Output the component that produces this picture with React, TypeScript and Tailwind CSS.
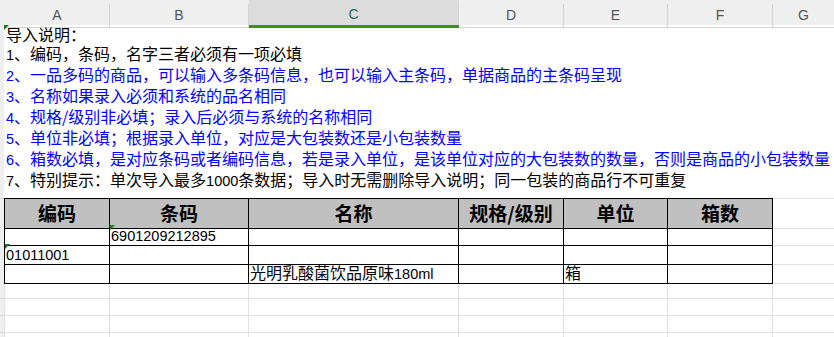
import React from "react";

const cjk = "font-['Noto_Sans_CJK_SC',sans-serif]";
const headCols = "grid grid-cols-[5px_105px_139px_210px_105px_104px_105px_1fr]";
const tableCols = "grid grid-cols-[4px_106px_139px_210px_105px_104px_105px_1fr]";

// digits in the sheet are half-width, ~8px each
const Num = ({ children }: { children: React.ReactNode }) => (
  <span className="font-['Liberation_Sans',sans-serif] text-[14.5px]">{children}</span>
);

const Flag = () => (
  <span className="absolute left-0 top-0 h-0 w-0 border-t-[5px] border-r-[5px] border-t-[#1f7a1f] border-r-transparent" />
);

const letters = ["A", "B", "C", "D", "E", "F", "G"];

const ColumnHeader = () => (
  <div className={`${headCols} h-[25px] bg-[#efefef]`}>
    <div className="border-b border-[#d4d4d4]" />
    {letters.map((l) => {
      const active = l === "C";
      return (
        <div
          key={l}
          className={`flex flex-col ${
            active ? "bg-[#dcdcdc] border-b-[3px] border-[#3f8c28]" : "border-b border-[#d4d4d4]"
          }`}
        >
          <div className="h-[4px]" />
          <div
            className={`flex-1 flex items-center justify-center font-['Liberation_Sans',sans-serif] text-[14px] ${
              active ? "text-[#1f6e5e]" : "text-[#555555]"
            } ${l !== "G" ? "border-r border-[#d4d4d4]" : ""}`}
          >
            {l}
          </div>
        </div>
      );
    })}
  </div>
);

const lines: { text: React.ReactNode; blue?: boolean }[] = [
  { text: "导入说明：" },
  { text: <><Num>1</Num>、编码，条码，名字三者必须有一项必填</> },
  { text: <><Num>2</Num>、一品多码的商品，可以输入多条码信息，也可以输入主条码，单据商品的主条码呈现</>, blue: true },
  { text: <><Num>3</Num>、名称如果录入必须和系统的品名相同</>, blue: true },
  { text: <><Num>4</Num>、规格/级别非必填；录入后必须与系统的名称相同</>, blue: true },
  { text: <><Num>5</Num>、单位非必填；根据录入单位，对应是大包装数还是小包装数量</>, blue: true },
  { text: <><Num>6</Num>、箱数必填，是对应条码或者编码信息，若是录入单位，是该单位对应的大包装数的数量，否则是商品的小包装数量</>, blue: true },
  { text: <><Num>7</Num>、特别提示：单次导入最多<Num>1000</Num>条数据；导入时无需删除导入说明；同一包装的商品行不可重复</> },
];

const headers = ["编码", "条码", "名称", "规格/级别", "单位", "箱数"];

const dataRows: React.ReactNode[][] = [
  ["", <Num key="b">6901209212895</Num>, "", "", "", ""],
  [<Num key="a">01011001</Num>, "", "", "", "", ""],
  ["", "", <>光明乳酸菌饮品原味<Num>180ml</Num></>, "", "箱", ""],
];

const flags: Record<string, boolean> = { "0-1": true, "1-0": true };

export default function App() {
  return (
    <div className={`w-[834px] h-[337px] overflow-hidden bg-white ${cjk}`}>
      <ColumnHeader />

      {/* merged instruction cell */}
      <div className={`${tableCols} h-[173px]`}>
        <div className="bg-[#efefef]" />
        <div className="col-span-7 relative pl-[2px] text-[16px] leading-[19px] whitespace-nowrap">
          <Flag />
          {lines.map((l, i) => (
            <div key={i} className={l.blue ? "text-[#0000ff]" : "text-black"}>
              {l.text}
            </div>
          ))}
        </div>
      </div>

      {/* table header */}
      <div className={`${tableCols} h-[27px]`}>
        <div className="bg-[#efefef] border-t border-b border-[#d4d4d4]" />
        {headers.map((h, i) => (
          <div
            key={h}
            className={`bg-[#c0c0c0] border-t border-b border-r border-black flex items-center justify-center text-[19px] font-bold text-black ${
              i === 0 ? "border-l" : ""
            }`}
          >
            {h}
          </div>
        ))}
        <div className="border-t border-b border-[#e1e1e1]" />
      </div>

      {/* data rows */}
      {dataRows.map((row, r) => (
        <div key={r} className={`${tableCols} h-[19px]`}>
          <div className="bg-[#efefef] border-b border-[#d4d4d4]" />
          {row.map((c, i) => (
            <div
              key={i}
              className={`relative border-b border-r border-black pl-px text-[16px] leading-[18px] text-black whitespace-nowrap ${
                i === 0 ? "border-l" : ""
              }`}
            >
              {flags[`${r}-${i}`] && <Flag />}
              {c}
            </div>
          ))}
          <div className="border-b border-[#e1e1e1]" />
        </div>
      ))}

      {/* empty sheet rows */}
      {[0, 1, 2, 3].map((r) => (
        <div key={r} className={`${tableCols} h-[17px]`}>
          <div className="bg-[#efefef] border-b border-[#d4d4d4]" />
          {[0, 1, 2, 3, 4, 5].map((i) => (
            <div
              key={i}
              className={`border-b border-r border-[#e1e1e1] ${i === 0 ? "border-l" : ""}`}
            />
          ))}
          <div className="border-b border-[#e1e1e1]" />
        </div>
      ))}
    </div>
  );
}
